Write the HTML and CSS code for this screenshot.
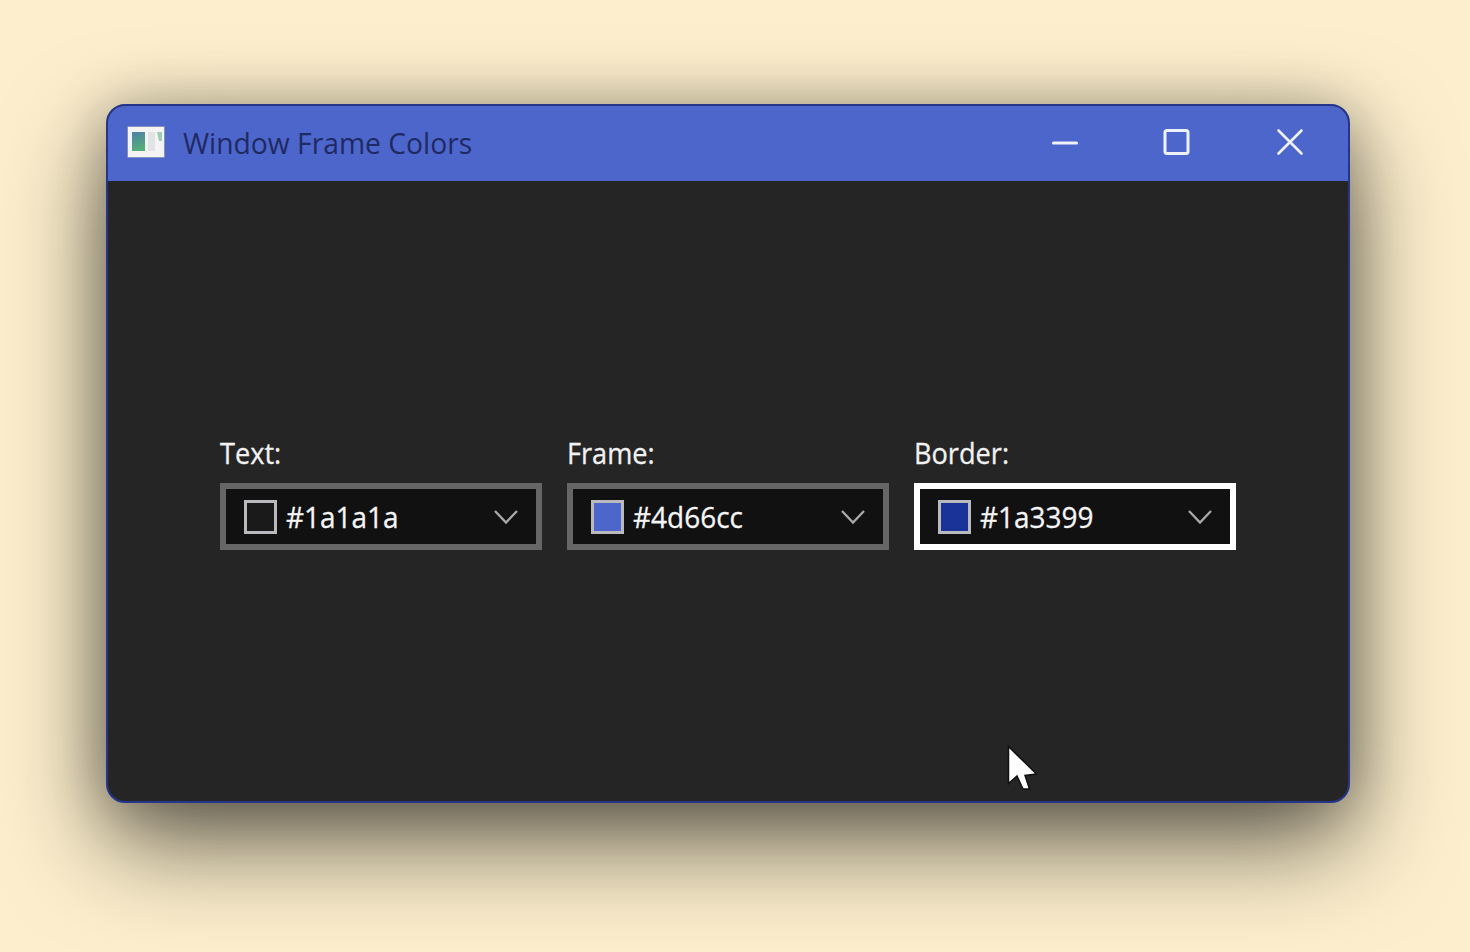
FILE: index.html
```html
<!DOCTYPE html>
<html lang="en">
<head>
<meta charset="utf-8">
<title>Window Frame Colors</title>
<link rel="stylesheet" href="styles.css">
</head>
<body>
<main class="window">
  <header class="titlebar">
    <svg class="app-icon" width="40" height="34" viewBox="0 0 40 34">
      <defs><linearGradient id="g" x1="0" y1="0" x2=".25" y2="1"><stop offset="0" stop-color="#4c80a8"/><stop offset="1" stop-color="#55ad78"/></linearGradient></defs>
      <rect x="1" y="1" width="38" height="32" rx="1" fill="#8790b8"/>
      <rect x="2" y="2" width="36" height="30" fill="#f4f4f5"/>
      <rect x="6" y="7" width="13" height="19" fill="url(#g)"/>
      <rect x="22" y="7" width="7" height="19" fill="#e2e3e5"/>
      <path d="M31 7h5v9h-3z" fill="#9dcdb4"/>
    </svg>
    <h1 class="title">Window Frame Colors</h1>
    <div class="controls">
      <svg width="28" height="28" viewBox="0 0 28 28"><path d="M2.500 15h23" stroke-width="3.2"/></svg>
      <svg width="28" height="28" viewBox="0 0 28 28"><rect x="2" y="2.500" width="23" height="23" rx="2" stroke-width="3"/></svg>
      <svg width="28" height="28" viewBox="0 0 28 28"><path d="M2.500 2.500l23 23M25.500 2.500L2.500 25.500" stroke-width="2.6"/></svg>
    </div>
  </header>
  <section class="fields">
    <div class="field">
      <span class="label">Text:</span>
      <div class="combo"><i class="swatch swatch-text"></i><span class="value">#1a1a1a</span><svg class="chevron" width="26" height="16" viewBox="0 0 26 16"><path d="M2 2l11 11.5L24 2"/></svg></div>
    </div>
    <div class="field">
      <span class="label">Frame:</span>
      <div class="combo"><i class="swatch swatch-frame"></i><span class="value">#4d66cc</span><svg class="chevron" width="26" height="16" viewBox="0 0 26 16"><path d="M2 2l11 11.5L24 2"/></svg></div>
    </div>
    <div class="field">
      <span class="label">Border:</span>
      <div class="combo focused"><i class="swatch swatch-border"></i><span class="value">#1a3399</span><svg class="chevron" width="26" height="16" viewBox="0 0 26 16"><path d="M2 2l11 11.5L24 2"/></svg></div>
    </div>
  </section>
</main>
<svg class="cursor" width="32" height="48" viewBox="0 0 32 48"><path d="M2.500 1.500V38.500l8.500-7.500 6 13h6.500L19 30.500l11.500-1.500z"/></svg>
</body>
</html>
```
FILE: styles.css
```css
* { box-sizing: border-box; }
body {
  margin: 0;
  height: 952px;
  padding: 104px 120px 0 106px;
  overflow: hidden;
  background: #fdefcd;
  font-family: "Open Sans", "Noto Sans", sans-serif;
}
.window {
  width: 1243.5px;
  height: 698.5px;
  border: 2px solid #26358c;
  border-radius: 19px;
  background: #252525;
  overflow: hidden;
  box-shadow: 0 40px 100px rgba(12, 12, 8, .62), 0 4px 54px rgba(12, 12, 8, .26);
}
.titlebar {
  height: 75px;
  display: flex;
  align-items: center;
  padding: 0 44px 0 18px;
  background: #4d66cc;
}
.app-icon { margin-bottom: 4px; }
.title {
  margin: -2px 0 0 16.5px;
  font-size: 30px;
  line-height: 40px;
  font-weight: 400;
  color: #1f2a63;
  transform: scaleX(.942);
  transform-origin: left;
  white-space: nowrap;
}
.controls { margin-left: auto; display: flex; gap: 84.5px; padding-bottom: 4px; }
.controls svg { fill: none; stroke: #eef0fb; stroke-linecap: round; }
.fields { display: flex; gap: 25px; padding: 252px 0 0 112px; }
.field { width: 322px; }
.label {
  display: block;
  height: 50px;
  font-size: 30px;
  line-height: 40px;
  color: #f2f2f2;
  -webkit-text-stroke: .3px #f2f2f2;
  transform: scaleX(.905);
  transform-origin: left;
}
.combo {
  height: 67px;
  border: 6px solid #666;
  background: #111;
  display: flex;
  align-items: center;
  padding: 0 17px 0 18px;
}
.focused { border-color: #fff; }
.swatch { width: 33px; height: 34px; border: 3px solid #b9b9be; }
.swatch-text { background: #1a1a1a; }
.swatch-frame { background: #4d66cc; }
.swatch-border { background: #1a3399; }
.value {
  margin-left: 9px;
  font-size: 30px;
  line-height: 40px;
  color: #f5f5f5;
  -webkit-text-stroke: .3px #f5f5f5;
  transform: scaleX(.932);
  transform-origin: left;
}
.chevron { margin-left: auto; fill: none; stroke: #aaa; stroke-width: 2.3; }
.cursor { position: absolute; left: 1006px; top: 745px; fill: #fff; stroke: #101010; stroke-width: 1.5; }
```
